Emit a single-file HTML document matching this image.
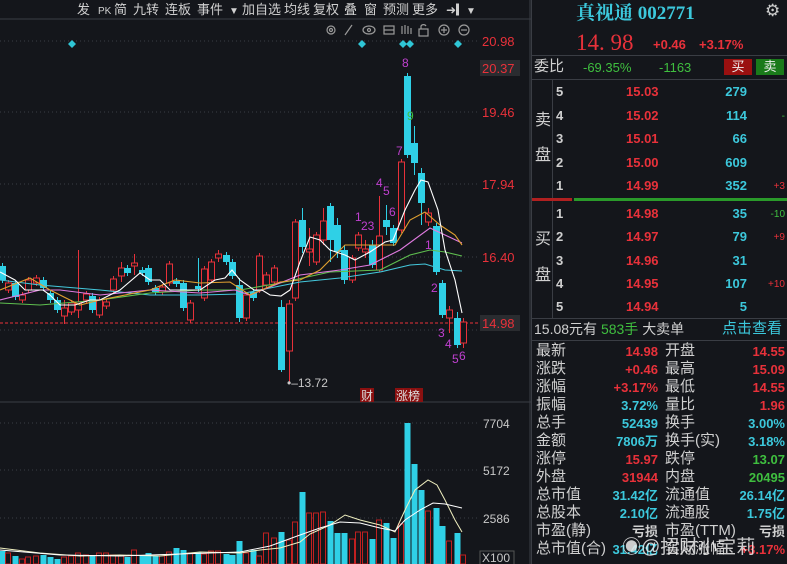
<!DOCTYPE html>
<html><head><meta charset="utf-8">
<style>
*{margin:0;padding:0;box-sizing:border-box}
body{width:787px;height:564px;background:#14161b;overflow:hidden;position:relative;font-family:"Liberation Sans","Noto Sans CJK SC",sans-serif;color:#c8c8c8}
#chart{position:absolute;left:0;top:0}
.rp{position:absolute;left:531px;top:0;width:256px;height:564px;border-left:1px solid #3a3d44}
.a{position:absolute;white-space:nowrap;font-size:14px;line-height:16px}
.r{color:#e8313a}.g{color:#3fbf3f}.c{color:#3cc8dc}.w{color:#d0d0d0}
.hl{position:absolute;left:0;width:256px;height:1px;background:#3a3d44}
b{font-weight:bold}
</style></head><body>
<svg id="chart" width="531" height="564" xmlns="http://www.w3.org/2000/svg" font-family="Liberation Sans, Noto Sans CJK SC, sans-serif">
<g id="grid" stroke="#3a3d44" stroke-dasharray="1,3">
<line x1="0" y1="41" x2="478" y2="41"/><line x1="0" y1="112" x2="478" y2="112"/>
<line x1="0" y1="184" x2="478" y2="184"/><line x1="0" y1="257" x2="478" y2="257"/>
<line x1="0" y1="330" x2="478" y2="330"/>
<line x1="0" y1="423" x2="478" y2="423"/><line x1="0" y1="470" x2="478" y2="470"/><line x1="0" y1="518" x2="478" y2="518"/>
</g>
<line x1="0" y1="19" x2="531" y2="19" stroke="#3a3d44"/>
<line x1="0" y1="402" x2="531" y2="402" stroke="#3a3d44"/>
<line x1="0" y1="323" x2="478" y2="323" stroke="#e8313a" stroke-dasharray="3,2"/>
<line x1="530" y1="0" x2="530" y2="564" stroke="#3a3d44"/>
<g font-size="13" fill="#d0d0d0">
<text x="77" y="14">发</text><text x="98" y="14" font-size="10">PK</text><text x="114" y="14">简</text><text x="133" y="14">九转</text><text x="165" y="14">连板</text><text x="197" y="14">事件</text>
<text x="229" y="14" font-size="10">▼</text><text x="242" y="14">加自选</text><text x="284" y="14">均线</text><text x="313" y="14">复权</text><text x="344" y="14">叠</text><text x="364" y="14">窗</text><text x="383" y="14">预测</text><text x="412" y="14">更多</text>
<text x="446" y="14" font-size="12">➜▎</text><text x="466" y="14" font-size="10">▼</text>
</g>
<g stroke="#9a9a9a" fill="none" stroke-width="1.2">
<circle cx="331" cy="30" r="4"/><circle cx="331" cy="30" r="1.5"/>
<path d="M345 35 L352 25"/>
<ellipse cx="369" cy="30" rx="6" ry="4"/><circle cx="369" cy="30" r="1.5"/>
<rect x="384" y="26" width="10" height="8"/><path d="M384 30h10"/>
<path d="M402 34v-8M405 34v-9M408 34v-8M411 34v-6"/>
<rect x="419" y="29" width="9" height="7"/><path d="M421 29v-3a3 3 0 0 1 5 0"/>
<circle cx="444" cy="30" r="5"/><path d="M441 30h6M444 27v6"/>
<circle cx="464" cy="30" r="5"/><path d="M461 30h6"/>
</g>
<g fill="#2fc6d6">
<path d="M72 40l4 4-4 4-4-4z"/><path d="M362 40l4 4-4 4-4-4z"/><path d="M403 40l4 4-4 4-4-4z"/><path d="M410 40l4 4-4 4-4-4z"/><path d="M458 40l4 4-4 4-4-4z"/>
</g>
<g id="candles"></g>
<g fill="none" stroke-width="1.1">
<polyline stroke="#44c8dc" points="0,280 40,285 100,290 150,295 200,295 240,294 260,290 300,282 340,278 380,272 410,265 425,264 445,270 462,271"/>
<polyline stroke="#5fbf4f" points="0,303 40,305 100,300 150,293 200,290 240,290 280,283 330,272 380,270 410,255 430,250 445,252 462,256"/>
<polyline stroke="#e07be0" points="0,300 40,290 60,290 100,295 150,290 200,293 235,290 250,295 280,283 300,275 340,270 370,265 400,250 430,228 445,235 462,243"/>
<polyline stroke="#e0a030" points="0,290 30,278 50,290 80,305 100,300 150,290 175,280 200,283 230,282 250,295 280,282 300,280 320,270 345,245 370,245 395,245 410,220 425,212 440,225 455,235 462,245"/>
<polyline stroke="#ffffff" points="0,272 15,280 25,290 43,290 50,295 60,305 75,305 90,300 100,300 120,290 140,273 150,280 160,280 170,290 200,290 215,280 225,278 232,270 240,280 254,290 262,290 270,295 281,296 290,290 300,262 310,237 320,240 330,250 345,255 355,260 370,252 385,242 393,240 405,210 415,190 421,180 428,182 438,210 445,250 455,280 462,313"/>
</g>
<g font-size="12" fill="#c040d0">
<text x="402" y="67">8</text><text x="407" y="120" fill="#40c040">9</text><text x="396" y="155">7</text><text x="376" y="187">4</text><text x="383" y="195">5</text><text x="389" y="216">6</text>
<text x="355" y="221">1</text><text x="361" y="230">23</text><text x="425" y="249">1</text><text x="431" y="292">2</text><text x="438" y="337">3</text><text x="445" y="348">4</text><text x="452" y="363">5</text><text x="459" y="360">6</text>
</g>
<text x="287" y="387" font-size="12" fill="#c8c8c8">•–13.72</text>
<rect x="360" y="388" width="14" height="14" fill="#8a1010"/><text x="361" y="400" font-size="12" fill="#ddd">财</text>
<rect x="395" y="388" width="28" height="14" fill="#8a1010"/><text x="396" y="400" font-size="12" fill="#ddd">涨榜</text>
<g font-size="13" fill="#e8313a">
<text x="482" y="46">20.98</text>
<rect x="480" y="60" width="40" height="16" fill="#2a2c30"/><text x="482" y="73">20.37</text>
<text x="482" y="117">19.46</text><text x="482" y="189">17.94</text><text x="482" y="262">16.40</text>
<rect x="480" y="315" width="40" height="16" fill="#2a2c30"/><text x="482" y="328">14.98</text>
</g>
<g font-size="12" fill="#c8c8c8">
<text x="483" y="428">7704</text><text x="483" y="475">5172</text><text x="483" y="523">2586</text>
<rect x="480" y="551" width="34" height="14" fill="none" stroke="#555"/><text x="482" y="562">X100</text>
</g>
<g fill="none" stroke-width="1">
<polyline stroke="#f0f0c0" points="0,548 40,553 80,556 120,555 160,556 200,552 240,553 260,550 280,548 300,542 310,534 330,525 345,515 360,520 380,525 395,532 405,510 415,490 428,480 437,485 445,500 455,520 462,532"/>
<polyline stroke="#ffffff" points="0,550 60,555 120,556 180,554 240,552 270,546 300,535 320,528 340,522 360,523 380,528 395,531 405,520 420,510 433,503 445,504 462,508"/>
</g>
</svg>
<script>
var C=[
[2,1,266,280],[8,0,283,290],[15,1,283,297],[22,0,295,300],[28,0,280,290],[36,0,278,283],[43,1,280,288],[50,1,293,300],[57,1,300,310],[64,0,308,316,300,324],[71,0,303,312],[78,0,302,310,250,318],[86,0,294,300],[92,1,296,310],[99,0,300,315],[106,0,302,306],[113,0,279,290],[121,0,268,276,262,282],[127,1,268,273],[134,0,263,266,254,275],[142,1,270,273],[148,1,268,282],[155,1,288,292],[162,0,287,292],[169,0,264,283],[176,1,281,284],[183,1,283,308],[190,0,303,320],[198,1,286,289,258,292],[204,0,269,298],[211,0,262,280],[218,0,254,258,250,262],[226,1,255,262],[232,1,262,276],[239,1,285,318,278,322],[246,0,295,318],[253,1,292,298],[259,0,256,290],[266,0,275,285],[274,0,268,282],
[281,1,307,370,300,372],[289,0,304,351,300,383],[295,0,222,298],[302,1,220,247,208,253],[309,0,249,252,228,266],[316,0,235,262],[323,0,221,240,208,245],[330,1,206,240,203,262],[337,1,225,252,218,258],[344,1,250,280,245,284],[352,0,258,280],[358,0,235,248],[365,0,249,252,240,258],[372,1,245,265,240,268],[379,0,236,270,196,272],[386,1,220,227,205,235],[393,1,228,243],[401,0,162,230],[407,1,76,155],[414,1,143,163,126,175],[421,1,173,203,168,225],[428,0,213,222,208,226],[436,1,226,272],[442,1,283,315],[449,0,310,318,306,333],[457,1,318,345,312,348],[463,0,322,343,318,348]];
var V=[551,553,556,559,557,556,555,557,559,557,556,553,555,556,553,553,555,556,557,550,555,553,556,556,552,548,550,553,552,554,551,551,554,555,541,553,550,556,533,538,
532,540,522,492,513,513,512,521,533,533,539,532,532,539,520,523,538,524,423,464,490,511,508,526,541,533,555];
var s='',vs='';
C.forEach(function(c,i){var x=c[0],up=!c[1],t=c[2],b=c[3],h=c[4]||t-3,l=c[5]||b+3;var col=up?'#e8313a':'#2fd0e6';
s+='<line x1="'+(x+.5)+'" y1="'+h+'" x2="'+(x+.5)+'" y2="'+l+'" stroke="'+col+'"/>';
if(up)s+='<rect x="'+(x-2.5)+'" y="'+t+'" width="6" height="'+Math.max(1,b-t)+'" fill="#14161b" stroke="'+col+'"/>';
else s+='<rect x="'+(x-3)+'" y="'+t+'" width="7" height="'+Math.max(2,b-t)+'" fill="'+col+'"/>';
var v=V[i]||550;
if(up)vs+='<rect x="'+(x-2.5)+'" y="'+v+'" width="5" height="'+(564-v)+'" fill="#14161b" stroke="#c02020"/>';
else vs+='<rect x="'+(x-2.5)+'" y="'+v+'" width="6" height="'+(564-v)+'" fill="#2fd0e6"/>';
});
document.getElementById('candles').innerHTML=vs+s;
</script>
<div class="rp">
<div class="a c" style="left:44px;top:3px;font-size:19px;line-height:22px;font-family:'Liberation Serif','Noto Serif CJK SC',serif;font-weight:bold">真视通 002771</div>
<div class="a" style="left:233px;top:3px;font-size:17px;color:#ccc">⚙</div>
<div class="a r" style="left:44px;top:30px;font-size:23px;line-height:26px;font-family:'Liberation Serif',serif">14. 98</div>
<div class="a r" style="left:121px;top:37px;font-size:13px"><b>+0.46</b></div>
<div class="a r" style="left:167px;top:37px;font-size:13px"><b>+3.17%</b></div>
<div class="hl" style="top:55px"></div>
<div class="a w" style="left:2px;top:59px;font-size:15px">委比</div>
<div class="a g" style="left:51px;top:60px;font-size:13px">-69.35%</div>
<div class="a g" style="left:127px;top:60px;font-size:13px">-1163</div>
<div class="a" style="left:192px;top:59px;width:28px;height:16px;background:#9a1010;color:#eee;text-align:center;font-size:13px">买</div>
<div class="a" style="left:224px;top:59px;width:28px;height:16px;background:#1a7a1a;color:#eee;text-align:center;font-size:13px">卖</div>
<div class="hl" style="top:79px"></div>
<div style="position:absolute;left:20px;top:80px;width:1px;height:238px;background:#3a3d44"></div>
<div class="a w" style="left:3px;top:113px;font-size:16px">卖</div>
<div class="a w" style="left:3px;top:148px;font-size:16px">盘</div>
<div class="a w" style="left:3px;top:232px;font-size:16px">买</div>
<div class="a w" style="left:3px;top:268px;font-size:16px">盘</div>
<div style="position:absolute;left:0;top:198px;width:40px;height:3px;background:#b02020"></div>
<div style="position:absolute;left:42px;top:198px;width:214px;height:3px;background:#2a9a2a"></div>
<div id="ob"></div>
<div class="hl" style="top:318px"></div>
<div class="a" style="left:2px;top:321px;font-size:14px"><span class="w">15.08元有</span> <span class="g">583手</span> <span class="w">大卖单</span></div>
<div class="a c" style="left:190px;top:321px;font-size:15px">点击查看</div>
<div class="hl" style="top:340px"></div>
<div id="st"></div>
<div class="a" style="left:90px;top:540px;font-size:19px;color:rgba(235,235,235,.85)">◉@招财小宝莉</div>
</div>
<script>
var ob=[['5','15.03','279',''],['4','15.02','114','-'],['3','15.01','66',''],['2','15.00','609',''],['1','14.99','352','+3']];
var bb=[['1','14.98','35','-10'],['2','14.97','79','+9'],['3','14.96','31',''],['4','14.95','107','+10'],['5','14.94','5','']];
var h='';
function row(r,y){h+='<div class="a w" style="left:24px;top:'+y+'px;font-size:13px"><b>'+r[0]+'</b></div><div class="a r" style="left:94px;top:'+y+'px;font-size:13px"><b>'+r[1]+'</b></div><div class="a c" style="right:40px;top:'+y+'px;font-size:13px"><b>'+r[2]+'</b></div>';
if(r[3])h+='<div class="a '+(r[3][0]=='-'?'g':'r')+'" style="right:2px;top:'+(y+1)+'px;font-size:10px">'+r[3]+'</div>';}
ob.forEach(function(r,i){row(r,84+i*23.5)});bb.forEach(function(r,i){row(r,206+i*23.3)});
document.getElementById('ob').innerHTML=h;
var S=[['最新','14.98','r','开盘','14.55','r'],['涨跌','+0.46','r','最高','15.09','r'],['涨幅','+3.17%','r','最低','14.55','r'],['振幅','3.72%','c','量比','1.96','r'],['总手','52439','c','换手','3.00%','c'],['金额','7806万','c','换手(实)','3.18%','c'],['涨停','15.97','r','跌停','13.07','g'],['外盘','31944','r','内盘','20495','g'],['总市值','31.42亿','c','流通值','26.14亿','c'],['总股本','2.10亿','c','流通股','1.75亿','c'],['市盈(静)','亏损','w','市盈(TTM)','亏损','w'],['总市值(合)','31.42亿','c','实际涨幅','+3.17%','r']];
h='';S.forEach(function(r,i){var y=343+i*18;
h+='<div class="a w" style="left:4px;top:'+y+'px;font-size:15px">'+r[0]+'</div><div class="a '+r[2]+'" style="right:129px;top:'+(y+1)+'px;font-size:13px"><b>'+r[1]+'</b></div><div class="a w" style="left:133px;top:'+y+'px;font-size:15px">'+r[3]+'</div><div class="a '+r[5]+'" style="right:2px;top:'+(y+1)+'px;font-size:13px"><b>'+r[4]+'</b></div>';});
document.getElementById('st').innerHTML=h;
</script>
</body></html>
